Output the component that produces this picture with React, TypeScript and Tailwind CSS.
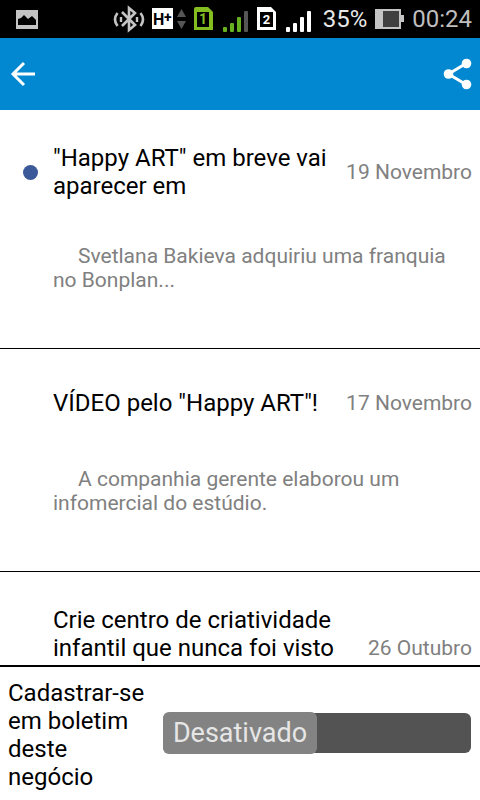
import { useState } from "react";

const news = [
  {
    title: "\"Happy ART\" em breve vai aparecer em",
    date: "19 Novembro",
    text: "Svetlana Bakieva adquiriu uma franquia no Bonplan...",
    unread: true,
    titleClass: "",
  },
  {
    title: "VÍDEO pelo \"Happy ART\"!",
    date: "17 Novembro",
    text: "A companhia gerente elaborou um infomercial do estúdio.",
    unread: false,
    titleClass: "",
  },
  {
    title: "Crie centro de criatividade infantil que nunca foi visto",
    date: "26 Outubro",
    text: "",
    unread: false,
    titleClass: "min-h-[84px]",
  },
];

function StatusBar() {
  return (
    <div className="flex h-[38px] shrink-0 items-center justify-between bg-black pl-4 pr-2">
      <svg width="22" height="19" viewBox="0 0 22 19" aria-label="Imagem">
        <rect width="22" height="19" fill="#c4c4c4" />
        <path d="M2 15V9l3-1 3-3 4 4 4-3 4 4v5z" fill="#000" />
      </svg>

      <div className="flex items-center">
        <svg width="200" height="38" viewBox="0 0 200 38" aria-label="Conexões">
          {/* bluetooth */}
          <g fill="none" stroke="#c4c4c4" strokeWidth="2.6">
            <path d="M9 12l13 13-6 5V8l6 5L9 26" />
            <path d="M4.500 13q-5 6.500 0 13M27.500 13q5 6.500 0 13" />
            <path d="M8 17v5M24 17v5" strokeWidth="2.4" />
          </g>
          {/* network type */}
          <rect x="39" y="8" width="21" height="21" fill="#fff" />
          <text x="40" y="25" fontSize="16" fontFamily="Roboto, sans-serif" fontWeight="700" fill="#000">H</text>
          <text x="51" y="22" fontSize="14" fontFamily="Roboto, sans-serif" fontWeight="700" fill="#000">+</text>
          <path d="M68.500 9l4.500 8h-9zM68.500 29l4.500-8h-9z" fill="#555" />
          {/* sim 1 */}
          <path d="M81 9q0-2 2-2h12l5 5v18H81z" fill="#84bd20" />
          <rect x="84" y="12" width="12" height="15" fill="#000" />
          <text x="90" y="24" textAnchor="middle" fontSize="14" fontFamily="Roboto, sans-serif" fontWeight="700" fill="#84bd20">1</text>
          <g fill="#67b020">
            <rect x="110" y="27" width="4" height="5" rx="1" />
            <rect x="117" y="23" width="4" height="9" rx="1" />
            <rect x="124" y="17" width="4" height="15" rx="1" />
            <rect x="131" y="11" width="4" height="21" rx="1" fill="#555" />
          </g>
          {/* sim 2 */}
          <path d="M144 7h14l5 5v18h-19z" fill="#fff" />
          <rect x="147" y="12" width="13" height="15" fill="#000" />
          <text x="153.500" y="24" textAnchor="middle" fontSize="13" fontFamily="Roboto, sans-serif" fontWeight="700" fill="#fff">2</text>
          <g fill="#fff">
            <rect x="173" y="27" width="4" height="5" rx="1" />
            <rect x="180" y="23" width="4" height="9" rx="1" />
            <rect x="187" y="17" width="4" height="15" rx="1" />
            <rect x="194" y="11" width="4" height="21" rx="1" />
          </g>
        </svg>
        <span className="ml-2.5 text-2xl leading-7 text-[#e8e8e8]">35%</span>
        <svg className="ml-2" width="29" height="20" viewBox="0 0 29 20" aria-label="Bateria">
          <path d="M0 0h26v6h3v7h-3v7H0z" fill="#c4c4c4" />
          <rect x="8" y="2" width="16" height="16" fill="#404040" />
        </svg>
        <span className="ml-2 text-2xl leading-7 text-[#bebebe]">00:24</span>
      </div>
    </div>
  );
}

function AppBar() {
  return (
    <header className="flex h-[72px] shrink-0 items-center justify-between bg-[#0288d1] pl-2">
      <button type="button" aria-label="Voltar" className="p-0.5">
        <svg width="26" height="26" viewBox="0 0 26 26" fill="none" stroke="#fff" strokeWidth="3">
          <path d="M25 13H3M14 2L3 13l11 11" />
        </svg>
      </button>
      <button type="button" aria-label="Compartilhar" className="pr-1">
        <svg width="36" height="34" viewBox="0 0 36 34" fill="#fff">
          <path d="M26 6.500L8.500 17l17.500 10.500" fill="none" stroke="#fff" strokeWidth="3" />
          <circle cx="26.500" cy="6.500" r="4.800" />
          <circle cx="8.500" cy="17" r="4.800" />
          <circle cx="26.500" cy="27.500" r="4.800" />
        </svg>
      </button>
    </header>
  );
}

export default function App() {
  const [subscribed, setSubscribed] = useState(false);

  return (
    <div className="flex h-screen flex-col bg-white font-['Roboto',sans-serif] text-black">
      <StatusBar />
      <AppBar />

      <main className="min-h-0 flex-1 overflow-y-auto [scrollbar-width:none]">
        {news.map((item) => (
          <article key={item.title} className="border-b border-black pb-14 pr-2 pt-[34px]">
            <div className="flex min-h-10 items-center">
              <div className="flex w-[53px] shrink-0 justify-center pr-2 pl-4">
                {item.unread && <span className="size-[15px] shrink-0 rounded-full bg-[#3b5998]" />}
              </div>
              <h2 className={`flex-1 text-2xl leading-7 ${item.titleClass}`}>{item.title}</h2>
              <time className="ml-1 shrink-0 text-[21px] leading-6 text-[#808080]">{item.date}</time>
            </div>
            <p className="mt-11 pl-[53px] indent-[25px] text-[21px] leading-6 text-[#808080]">{item.text}</p>
          </article>
        ))}
      </main>

      <footer className="flex shrink-0 items-center border-t-2 border-black px-2 pb-[9px] pt-3">
        <span id="newsletter" className="w-[148px] shrink-0 text-2xl leading-7">
          Cadastrar-se em boletim deste negócio
        </span>
        <button
          type="button"
          role="switch"
          aria-checked={subscribed}
          aria-labelledby="newsletter"
          onClick={() => setSubscribed(!subscribed)}
          className={`mb-1 ml-[7px] mr-px flex h-10 flex-1 items-center rounded-md bg-[#535353] ${subscribed ? "justify-end" : "justify-start"}`}
        >
          <span className="flex h-[42px] w-1/2 shrink-0 items-center justify-center rounded-md bg-[#838383] text-[27px] leading-8 text-[#e6e6e6]">
            {subscribed ? "Ativado" : "Desativado"}
          </span>
        </button>
      </footer>
    </div>
  );
}
